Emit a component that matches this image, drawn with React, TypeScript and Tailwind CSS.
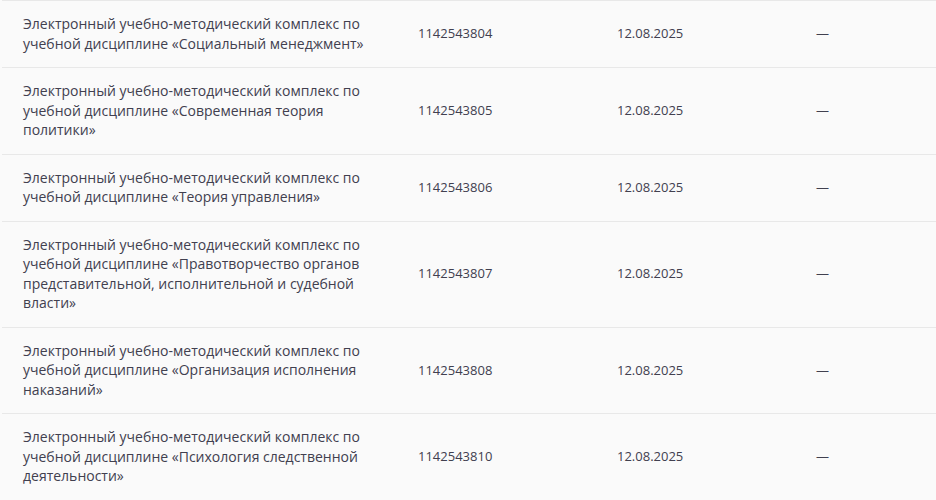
import React from "react";

const rows = [
  { t: "Электронный учебно-методический комплекс по учебной дисциплине «Социальный менеджмент»", n: "1142543804" },
  { t: "Электронный учебно-методический комплекс по учебной дисциплине «Современная теория политики»", n: "1142543805" },
  { t: "Электронный учебно-методический комплекс по учебной дисциплине «Теория управления»", n: "1142543806" },
  { t: "Электронный учебно-методический комплекс по учебной дисциплине «Правотворчество органов представительной, исполнительной и судебной власти»", n: "1142543807" },
  { t: "Электронный учебно-методический комплекс по учебной дисциплине «Организация исполнения наказаний»", n: "1142543808" },
  { t: "Электронный учебно-методический комплекс по учебной дисциплине «Психология следственной деятельности»", n: "1142543810" },
];

export default function App() {
  return (
    <div
      className="w-[936px] h-[500px] overflow-hidden bg-[#fafafa] pl-[2px] text-[13px] leading-[19.5px] text-[#41404f]"
      style={{ fontFamily: '"Open Sans", "Noto Sans", sans-serif' }}
    >
      <div className="border-t border-[#e8e8e8]">
        {rows.map((r, i) => (
          <div key={i} className="flex items-center border-b border-[#e8e8e8]">
            <div className="w-[395px] shrink-0 pl-[21px] pr-[21px] pt-[13px] pb-[14px] text-[14px]">{r.t}</div>
            <div className="w-[199px] shrink-0 pl-[21px]">{r.n}</div>
            <div className="w-[199px] shrink-0 pl-[21px]">12.08.2025</div>
            <div className="pl-[21px]">—</div>
          </div>
        ))}
      </div>
    </div>
  );
}
